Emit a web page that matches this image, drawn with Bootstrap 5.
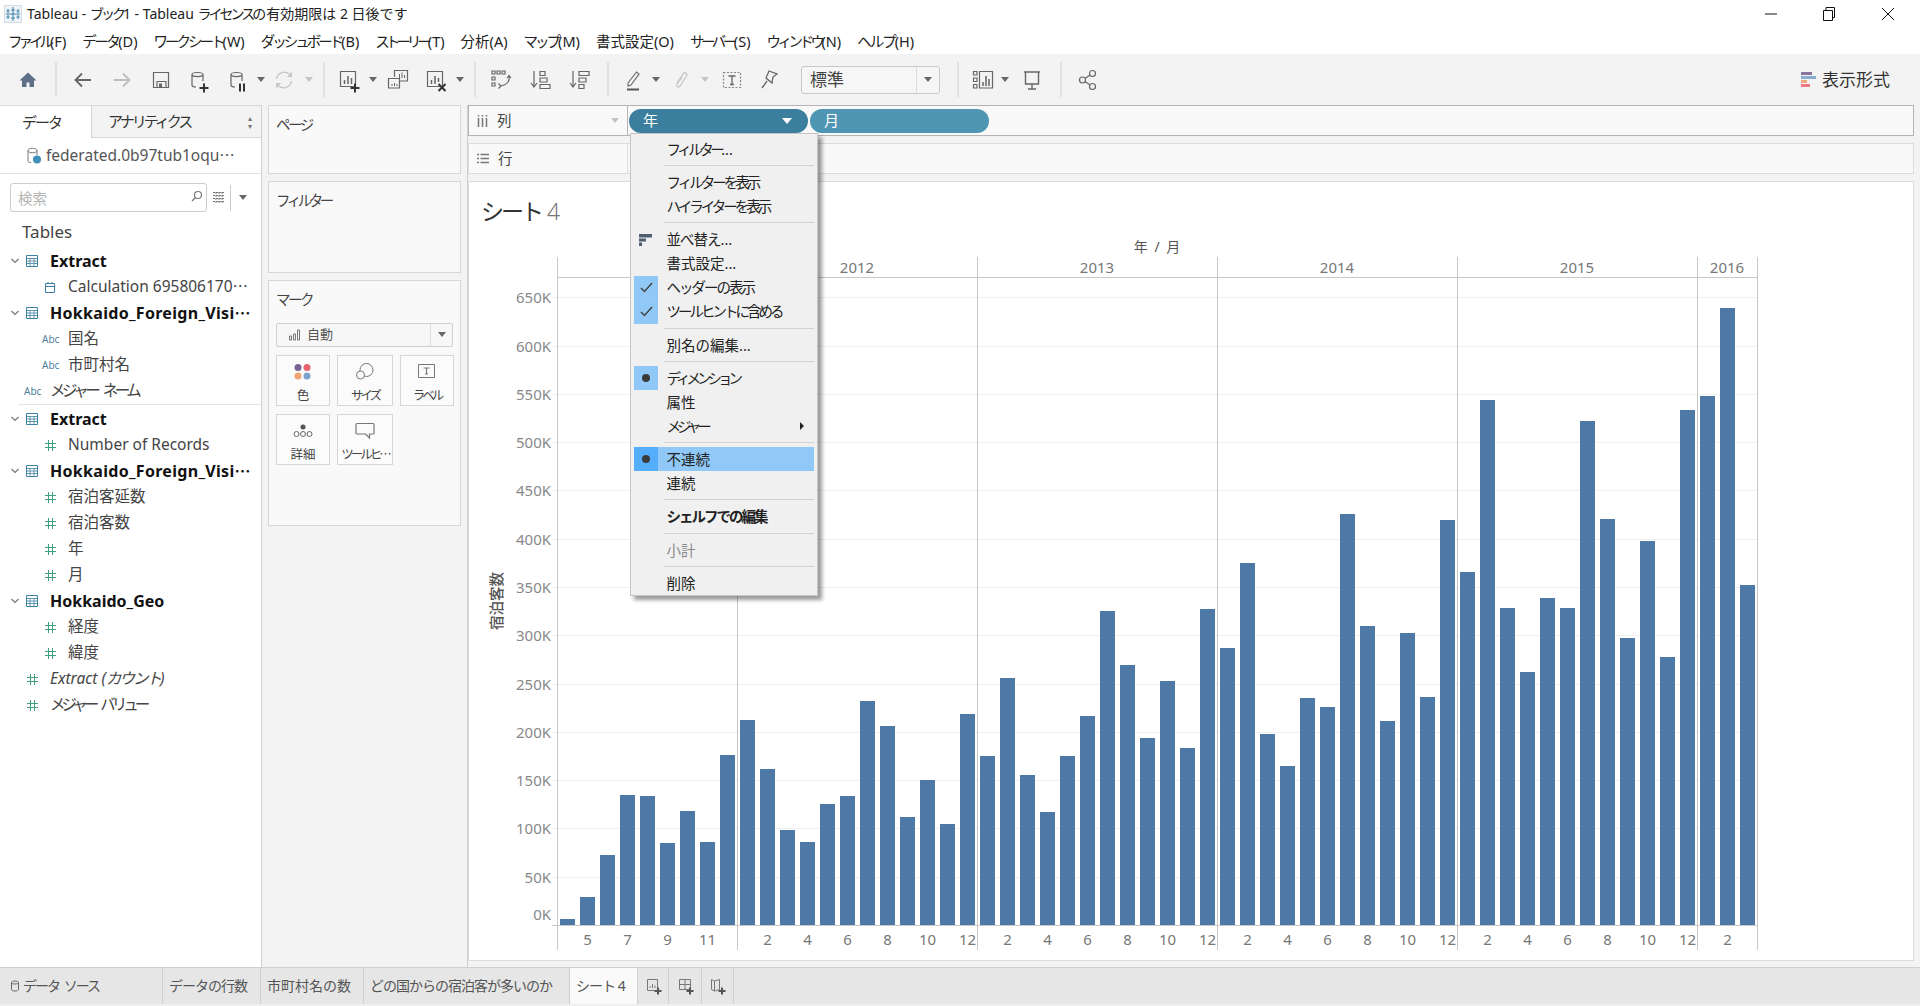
<!DOCTYPE html>
<html lang="ja">
<head>
<meta charset="utf-8">
<title>Tableau</title>
<link href="https://cdn.jsdelivr.net/npm/bootstrap@5.3.0/dist/css/bootstrap.min.css" rel="stylesheet">
<style>
html,body{height:100%}
body{font-family:"Noto Sans","Noto Sans CJK JP",sans-serif;font-size:14.5px;line-height:1;color:#333;background:#fff;overflow:hidden;height:1006px;display:flex;flex-direction:column}
.k05{letter-spacing:-.5px}.k1{letter-spacing:-1px}.k15{letter-spacing:-1.5px}.k2{letter-spacing:-2px}.k25{letter-spacing:-2.5px}.k3{letter-spacing:-3px}.k35{letter-spacing:-3.5px}.k4{letter-spacing:-4px}
.kp{letter-spacing:.3px}
.wsp{word-spacing:5px}.wsp3{word-spacing:3px}
.ic{width:24px;height:24px;fill:none;stroke:#666;stroke-width:1.2;display:block;overflow:visible}
.tri{width:0;height:0;border-left:4px solid transparent;border-right:4px solid transparent;border-top:5px solid #666}
.tri.lt{border-top-color:#c4c4c4}
.ttl{height:27px;padding-left:4px;font-size:14px;color:#222}
.ttl-txt{margin-left:1px}
.wctl{margin-left:auto;padding-right:25px;gap:46px}
.mnu{height:27px;padding:2px 0 0 8px;gap:16px;color:#222}
.tb{height:51px;background:#f3f3f3;display:grid;align-items:center;grid-template-columns:28px 27px 39px 39px 38px 38px 24px 23px 25px 15px 25px 24px 25px 38px 24px 15px 26px 40px 39px 28px 25px 23px 25px 24px 27px 37px 32px 156.5px 25.5px 22px 27px 29px 27px 1fr auto;padding-left:28px}
.tb>*{justify-self:start;transform:translateX(-50%)}
.tb>.tsep{width:1px;height:35px;background:#d0d0d0}
.tb>.tsel{transform:none;width:139px;height:28px;background:#f6f6f6;border:1px solid #c9c9c9;border-radius:3px;font-size:17px;color:#444;padding-left:8px}
.tselarrow{margin-left:auto;width:23px;height:100%;border-left:1px solid #ddd}
.tb>.tview{justify-self:end;transform:none;font-size:17px;color:#333;margin-right:30px;gap:6px}
.vbars{width:15px;gap:1px}
.vbars i{display:block;height:3px}
.vb1{width:11px;background:#86749c}.vb2{width:15px;background:#8aacd2}.vb3{width:6px;background:#eda97e}.vb4{width:9px;background:#f07a84}
.mainrow{height:862px}
.lp{width:262px;border-right:1px solid #cfcfcf;flex:none}
.dtabs{height:33px;font-size:15px}
.dtab-on{width:91px;padding-left:22px;border-top:1px solid #dcdcdc}
.dtab-off{flex:1;padding-left:16px;background:#f3f3f3;border:1px solid #d6d6d6;border-right:0}
.updn{margin-left:auto;margin-right:9px;color:#777;font-size:8px}
.dsrc{height:36px;padding-left:27px;gap:5px;border-bottom:1px solid #e3e3e3;color:#555;font-size:15.5px}
.srch{height:38px;padding:9px 0 0 10px}
.srch input.form-control{width:197px;height:29px;border:1px solid #ccc;border-radius:3px;font-size:14.5px;padding:0 7px;background:#fff}
.srch input.form-control::placeholder{color:#b4b4b4}
.srchwrap{width:197px}
.lens{position:absolute;right:3px;top:6px}
.sgrid{margin-left:6px}
.ssep{width:1px;height:26px;background:#ccc;margin-left:5px}
.stri{margin-left:8px}
.tblh{height:36px;padding:3px 0 0 22px;font-size:17px;color:#444;display:flex;align-items:center}
.fl .list-group-item{height:26px;border:0;padding:0;background:transparent;display:flex;align-items:center;font-size:15.5px;color:#444;white-space:nowrap}
.fl .list-group-item.hdr{font-weight:700;color:#111;font-size:16px}
.abc{font-size:10px;color:#4e7e9b;width:17px;flex:none}
.gry-end{margin:0 0 1px 18px;border-bottom:1px solid #e3e3e3;height:1px}
.chev{width:8px;height:6px;margin:0 7px 0 11px;flex:none}
.tbli{width:12px;height:12px;margin-right:12px;flex:none}
.cali{width:12px;height:12px;flex:none;margin:0 12px 0 44px}
.hsh{width:11px;height:11px;flex:none}
.abc1{margin:0 9px 0 42px}.abc2{margin:0 9px 0 24px}
.hsh1{margin:0 12px 0 45px}.hsh2{margin:0 12px 0 27px}
.mid{width:206px;flex:none;background:#f3f3f3;padding:0 6px;gap:7px;border-right:1px solid #cfcfcf}
.mcard{background:#f9f9f9;border:1px solid #d6d6d6;padding:11px 7px;font-size:14.5px;color:#444}
.cpage{height:69px}
.cfilt{height:92px}
.cmark{height:246px}
.mk-dd{height:24px;margin-top:16px;border:1px solid #d0d0d0;border-radius:2px;background:#f7f7f7;font-size:13px;padding-left:11px;gap:6px;color:#555}
.mk-ar{margin-left:auto;width:22px;height:100%;border-left:1px solid #ddd}
.mk-grid{display:grid;grid-template-columns:54px 56px 54px;column-gap:7px;row-gap:8px;margin-top:8px}
.mk-b{height:51px;border:1px solid #d6d6d6;background:#fbfbfb;font-size:12.5px;color:#444;padding-top:6px;gap:6px}
.rt{background:#f3f3f3;padding-right:6px;gap:7px;min-width:0}
.shelf{height:31px;background:#f9f9f9}
.shelf-l{width:160px;flex:none;height:100%;padding-left:8px;font-size:14.5px;color:#444;gap:9px}
.shelf-col .shelf-l,.shelf-col .shelf-r{border:1px solid #b4b4b4}
.shelf-col .shelf-r{border-left:0;gap:2px;padding-left:1px}
.shelf-row .shelf-l,.shelf-row .shelf-r{border:1px solid #dcdcdc}
.shelf-row .shelf-r{border-left:0}
.shelf-r{flex:1;height:100%}
.pill{width:179px;height:24px;border-radius:12px;color:#fff;font-size:15px;padding-left:14px}
.pill-a{background:#3c7e9e}
.pill-b{background:#4e96b3;padding-left:14px}
.pill .tri{border-top-color:#fff;border-left-width:5px;border-right-width:5px;border-top-width:6px;margin-left:auto;margin-right:16px}
.sheet{flex:1;background:#fff;border:1px solid #dcdcdc;min-height:0;margin-bottom:6px}
.sh-t{height:50px;padding:18px 0 0 12px;font-size:23px;color:#333}
.sh-t .dim{color:#777;font-weight:300}
.chart{display:block;width:1443px;height:727px}
.chart text{font-family:"Noto Sans","Noto Sans CJK JP",sans-serif}
.tabsb{height:39px;background:#e6e6e6;border-top:1px solid #cfcfcf;border-bottom:2px solid #efefef;font-size:14px;color:#555;flex:none}
.st{height:100%;border-right:1px solid #cfcfcf;padding-left:6px}
.st1{width:163px;padding-left:11px;gap:4px}
.st2{width:98px}.st3{width:103px}.st4{width:206px}
.st5{width:68px;background:#fafafa}.st6,.st7,.st8{justify-content:center}
.st6{width:31px}.st7{width:33px}.st8{width:32px}
.st6 svg,.st7 svg,.st8 svg{margin-right:5px}
.ctx.dropdown-menu{position:absolute;top:133px;left:630px;width:188px;background:#f0f0f0;border:1px solid #c6c6c6;border-radius:0;padding:3px 3px 0;box-shadow:4px 4px 4px rgba(0,0,0,.4);font-size:14.5px;color:#222;min-width:0;display:block}
.ci{height:24px;display:flex;align-items:center}
.ci-m{width:24px;height:24px;flex:none;display:flex;align-items:center;justify-content:center;margin-right:8.5px}
.ci-m.on{background:#90c8f8}
.ci.sel{background:#90c8f8}
.ci.sel .ci-m{background:#55aefc}
.ci-s{height:1px;background:#d2d2d2;margin:4px 0 4.25px 30px}
.dotb{width:8px;height:8px;border-radius:50%;background:#3a3a3a}
.ci.dis{color:#8a8a8a}
.ci-arrow{margin-left:auto;margin-right:10px;width:0;height:0;border-top:4px solid transparent;border-bottom:4px solid transparent;border-left:4px solid #222}
</style>
</head>
<body>
<div class="ttl d-flex align-items-center">
<svg width="18" height="18" viewBox="0 0 18 18" class="me-1 flex-none"><rect x=".5" y=".5" width="17" height="17" fill="#eef3f8" stroke="#d5dbe2"/><path d="M9 2v14M2 9h14M4 4v4M2.500 6h3M14 4v4M12.500 6h3M4 10v4M2.500 12h3M14 10v4M12.500 12h3M7 5h4M7 13h4" stroke="#3f7fa8" stroke-width="1"/></svg>
<span class="ttl-txt">Tableau - <span class="k3">ブック</span>1 - Tableau <span class="k3">ライセンス</span>の有効期限は 2 日後です</span>
<div class="wctl d-flex align-items-center">
<svg width="12" height="12" viewBox="0 0 12 12"><path d="M0 6h12" stroke="#111"/></svg>
<svg width="12" height="14" viewBox="0 0 12 14" fill="none" stroke="#111"><path d="M.5 3.500h9v10h-9zM3 3.500V.5h8.500v10H9.500"/></svg>
<svg width="14" height="14" viewBox="0 0 14 14" stroke="#111"><path d="M1 1l12 12M13 1 1 13"/></svg>
</div>
</div>
<div class="mnu d-flex align-items-center">
<span><span class="k4">ファイル</span>(F)</span><span><span class="k25">データ</span>(D)</span><span><span class="k3">ワークシート</span>(W)</span><span><span class="k3">ダッシュボード</span>(B)</span><span><span class="k4">ストーリー</span>(T)</span><span>分析(A)</span><span><span class="k3">マップ</span>(M)</span><span>書式設定(O)</span><span><span class="k35">サーバー</span>(S)</span><span><span class="k35">ウィンドウ</span>(N)</span><span><span class="k2">ヘルプ</span>(H)</span>
</div>
<div class="tb">
<svg class="ic" viewBox="0 0 24 24"><path d="M12 4.500 3.500 12.500H6V19h4.500v-4.500h3V19H18v-6.500h2.500z" fill="#5d7087" stroke="none"/></svg>
<div class="tsep"></div>
<svg class="ic" viewBox="0 0 24 24"><path d="M20 12H5M11 5.500 4.500 12l6.500 6.500" stroke-width="1.800"/></svg>
<svg class="ic" viewBox="0 0 24 24"><path d="M4 12h15M13 5.500l6.500 6.500-6.500 6.500" stroke="#bcbcbc" stroke-width="1.800"/></svg>
<svg class="ic" viewBox="0 0 24 24"><path d="M4.500 4.500h15v15h-15zM8 19.500v-6h9v6"/><path d="M10 15.500h3v4h-3z" fill="#666" stroke="none"/></svg>
<svg class="ic" viewBox="0 0 24 24"><path d="M5 6.500c0-2.700 11-2.700 11 0 0 2.700-11 2.700-11 0V17c0 1.200 1.500 2 4 2M16 6.500V13"/><path d="M12.500 20h9M17 15.500v9" stroke="#333" stroke-width="2"/></svg>
<svg class="ic" viewBox="0 0 24 24"><path d="M6 6.500c0-2.700 11-2.700 11 0 0 2.700-11 2.700-11 0V17c0 1.200 1.500 2 4 2M17 6.500V13"/><path d="M15 15.500v8M19 15.500v8" stroke="#333" stroke-width="2"/></svg>
<div class="tri"></div>
<svg class="ic" viewBox="0 0 24 24"><path d="M4.500 11A8 8 0 0 1 18 6.500M19.500 13A8 8 0 0 1 6 17.500" stroke="#c8c8c8" stroke-width="1.500"/><path d="M20 3.500v5.500h-5zM4 20.500V15h5z" fill="#c8c8c8" stroke="none"/></svg>
<div class="tri lt"></div>
<div class="tsep"></div>
<svg class="ic" viewBox="0 0 24 24"><path d="M3.500 3.500h15v15h-15z"/><path d="M7.500 16v-4M11 16V8M14.500 16v-6" stroke-width="1.500"/><path d="M13.500 20h9M18 15.500v9" stroke="#333" stroke-width="2"/></svg>
<div class="tri"></div>
<svg class="ic" viewBox="0 0 24 24"><path d="M8.500 9V2.500h13V13h-8M2.500 10.500h11V20h-11z"/><path d="M13.500 10V6M16 10V4.500M18.500 10V7M6 18v-2M8.500 18v-3M11 18v-2" stroke-width="1"/></svg>
<svg class="ic" viewBox="0 0 24 24"><path d="M3.500 3.500h15v15h-15z"/><path d="M7.500 16v-4M11 16V8M14.500 14v-4" stroke-width="1.500"/><path d="M14.500 16l7 7M21.500 16l-7 7" stroke="#333" stroke-width="2"/></svg>
<div class="tri"></div>
<div class="tsep"></div>
<svg class="ic" viewBox="0 0 24 24"><path d="M3 3h3v3H3zM8 3h3v3H8zM13 3h3v3h-3zM3 9h3v3H3zM3 15h3v3H3z"/><path d="M20 8c1 5-2 9-8 10M9.500 15.500 12 18l-2.500 2.500M18 10l2-2.500 2 2.500"/></svg>
<svg class="ic" viewBox="0 0 24 24"><path d="M5 3v15M2 15l3 4 3-4"/><path d="M11 3.500h5v4h-5zM11 10h7v4h-7zM11 16.500h10v4H11z"/></svg>
<svg class="ic" viewBox="0 0 24 24"><path d="M5 3v15M2 15l3 4 3-4"/><path d="M11 3.500h10v4H11zM11 10h7v4h-7zM11 16.500h5v4h-5z"/></svg>
<div class="tsep"></div>
<svg class="ic" viewBox="0 0 24 24"><path d="M7 15 15.500 4l2.500 2-8 11-3 1z" stroke-width="1.100"/><path d="M6 21.500h12" stroke="#555" stroke-width="2"/></svg>
<div class="tri"></div>
<svg class="ic" viewBox="0 0 24 24"><path d="M8 15 14 6c2-2.500 5-.5 3.500 2L11 18c-1.500 2-4.500.5-3-2L13 9" stroke="#c8c8c8" stroke-width="1.300"/></svg>
<div class="tri lt"></div>
<svg class="ic" viewBox="0 0 24 24"><path d="M3.500 4.500h17v15h-17z" stroke-dasharray="2 1.500" stroke="#888"/><path d="M8.500 8h7M12 8v8.500M10 16.500h4" stroke-width="1.300"/></svg>
<svg class="ic" viewBox="0 0 24 24"><path d="M12 3l8 3-4 3-1 6-6-5zM10 13l-5 7" stroke-width="1.300"/></svg>
<div class="tsel d-flex align-items-center"><span>標準</span><div class="tselarrow d-flex align-items-center justify-content-center"><div class="tri"></div></div></div>
<div class="tsep"></div>
<svg class="ic" viewBox="0 0 24 24"><path d="M2.500 3.500h3.500V7H2.500zM2.500 10h3.500v3.500H2.500zM2.500 16.500h3.500V20H2.500zM8.500 3.500h13V20h-13z"/><path d="M12 18v-4M15 18V8M18 18v-7" stroke-width="1.500"/></svg>
<div class="tri"></div>
<svg class="ic" viewBox="0 0 24 24"><path d="M4 4h16M5.500 4v12h13V4M12 16v5M8 21h8" stroke-width="1.400"/></svg>
<div class="tsep"></div>
<svg class="ic" viewBox="0 0 24 24"><circle cx="16.500" cy="5.500" r="3"/><circle cx="6.500" cy="12" r="3"/><circle cx="16.500" cy="18.500" r="3"/><path d="M14 7 9 10.500M9 13.500l5 3.500"/></svg>
<div class="tview d-flex align-items-center">
<div class="vbars d-flex flex-column"><i class="vb1"></i><i class="vb2"></i><i class="vb3"></i><i class="vb4"></i></div>
<span>表示形式</span>
</div>
</div>

<div class="mainrow d-flex">
<div class="lp d-flex flex-column">
<div class="dtabs d-flex">
<div class="dtab-on d-flex align-items-center"><span class="k2">データ</span></div>
<div class="dtab-off d-flex align-items-center"><span class="k3">アナリティクス</span><div class="updn d-flex flex-column"><span>▴</span><span>▾</span></div></div>
</div>
<div class="dsrc d-flex align-items-center">
<svg width="14" height="17" viewBox="0 0 14 17" fill="none" stroke="#777"><path d="M1 3.500c0-3 9-3 9 0 0 3-9 3-9 0V14c0 1 1 1.500 3 1.500M10 3.500V8"/><circle cx="10" cy="12.500" r="4" fill="#3f8fbb" stroke="none"/></svg>
<span>federated.0b97tub1oqu⋯</span>
</div>
<div class="srch d-flex align-items-center">
<div class="srchwrap position-relative">
<input class="form-control" placeholder="検索" aria-label="検索">
<svg class="lens" width="14" height="14" viewBox="0 0 14 14" fill="none" stroke="#777" stroke-width="1.200"><circle cx="8" cy="6" r="3.500"/><path d="M5.500 8.500 2 12"/></svg>
</div>
<svg class="sgrid" width="12" height="11" viewBox="0 0 12 11" stroke="#777"><path d="M0 .5h12M0 3.500h12M0 6.500h12M0 9.500h12M3 0v11M6 0v11M9 0v11" stroke-dasharray="2 1"/></svg>
<div class="ssep"></div>
<div class="tri stri"></div>
</div>
<div class="tblh">Tables</div>
<div class="fl list-group list-group-flush flex-grow-1" id="fields"></div>
</div>

<div class="mid d-flex flex-column">
<div class="mcard cpage"><span class="k25">ページ</span></div>
<div class="mcard cfilt"><span class="k35">フィルター</span></div>
<div class="mcard cmark">
<span class="k25">マーク</span>
<div class="mk-dd d-flex align-items-center">
<svg width="13" height="12" viewBox="0 0 13 12" fill="none" stroke="#777"><path d="M1.500 11V7h2v4zM5.500 11V5h2v6zM9.500 11V1h2v10z"/></svg>
<span>自動</span>
<div class="mk-ar d-flex align-items-center justify-content-center"><div class="tri"></div></div>
</div>
<div class="mk-grid">
<div class="mk-b d-flex flex-column align-items-center"><svg width="22" height="22" viewBox="0 0 22 22"><circle cx="6" cy="5.500" r="3.500" fill="#7b6294"/><circle cx="15" cy="5.500" r="3.500" fill="#e8606e"/><circle cx="6" cy="14" r="3.500" fill="#f0a271"/><circle cx="15" cy="14" r="3.500" fill="#7ca4cd"/></svg><span>色</span></div>
<div class="mk-b d-flex flex-column align-items-center"><svg width="22" height="22" viewBox="0 0 22 22" fill="none" stroke="#777"><circle cx="12.500" cy="8" r="6.500"/><circle cx="6.500" cy="13" r="4" fill="#fbfbfb"/></svg><span class="k3">サイズ</span></div>
<div class="mk-b d-flex flex-column align-items-center"><svg width="22" height="22" viewBox="0 0 22 22" fill="none" stroke="#777"><path d="M2.500 2.500h16v13h-16z"/><path d="M7.500 6h6M10.500 6v6M9 12h3" stroke-width="1.200"/></svg><span class="k3">ラベル</span></div>
<div class="mk-b d-flex flex-column align-items-center"><svg width="22" height="22" viewBox="0 0 22 22" fill="none" stroke="#666"><circle cx="11" cy="6" r="2.500" fill="#555" stroke="none"/><circle cx="4.500" cy="13" r="2.500"/><circle cx="11" cy="13" r="2.500"/><circle cx="17.500" cy="13" r="2.500"/></svg><span>詳細</span></div>
<div class="mk-b d-flex flex-column align-items-center"><svg width="22" height="22" viewBox="0 0 22 22" fill="none" stroke="#777" stroke-width="1.200"><path d="M3 2.500h16c.5 0 1 .5 1 1v8.500c0 .5-.5 1-1 1h-3.500V17l-4-4H3c-.5 0-1-.5-1-1V3.500c0-.5.500-1 1-1z"/></svg><span class="k3">ツールヒ⋯</span></div>
</div>
</div>
</div>

<div class="rt flex-grow-1 d-flex flex-column">
<div class="shelf shelf-col d-flex">
<div class="shelf-l d-flex align-items-center">
<svg width="11" height="13" viewBox="0 0 11 13" stroke="#777" stroke-width="1.500"><path d="M1.500 4v9M5.500 4v9M9.500 4v9M1.500 1v1.500M5.500 1v1.500M9.500 1v1.500"/></svg>
<span>列</span><div class="tri lt ms-auto me-2"></div></div>
<div class="shelf-r d-flex align-items-center">
<div class="pill pill-a d-flex align-items-center"><span>年</span><div class="tri"></div></div>
<div class="pill pill-b d-flex align-items-center"><span>月</span></div>
</div>
</div>
<div class="shelf shelf-row d-flex">
<div class="shelf-l d-flex align-items-center">
<svg width="12" height="11" viewBox="0 0 12 11" stroke="#777" stroke-width="1.500"><path d="M0 1.500h2M3.500 1.500H12M0 5.500h2M3.500 5.500H12M0 9.500h2M3.500 9.500H12"/></svg>
<span>行</span></div>
<div class="shelf-r"></div>
</div>
<div class="sheet">
<div class="sh-t"><span class="k3">シート</span> <span class="dim">4</span></div>
<svg class="chart" id="chart" viewBox="469 232 1443 727" role="img" aria-label="宿泊客数"></svg>
</div>
</div>
</div>

<div class="tabsb d-flex">
<div class="st st1 d-flex align-items-center"><svg width="8" height="12" viewBox="0 0 8 12" fill="none" stroke="#666"><path d="M.5 2.500c0-2 7-2 7 0v7c0 2-7 2-7 0zM.5 2.500c0 2 7 2 7 0"/></svg><span class="k2 wsp3">データ ソース</span></div>
<div class="st st2 d-flex align-items-center"><span class="k1">データの行数</span></div>
<div class="st st3 d-flex align-items-center"><span>市町村名の数</span></div>
<div class="st st4 d-flex align-items-center"><span class="k1">どの国からの宿泊客が多いのか</span></div>
<div class="st st5 d-flex align-items-center"><span class="k1">シート 4</span></div>
<div class="st st6 d-flex align-items-center"><svg width="18" height="18" viewBox="0 0 18 18" fill="none" stroke="#777"><path d="M2.500 2.500h10v11h-10zM5 11V9M7.500 11V7M10 11V8.500"/><path d="M9.500 14h7M13 10.500v7" stroke="#555" stroke-width="2"/></svg></div>
<div class="st st7 d-flex align-items-center"><svg width="18" height="18" viewBox="0 0 18 18" fill="none" stroke="#777"><path d="M2.500 2.500h11v10h-11zM8 2.500v10M2.500 7.500h11"/><path d="M9.500 14h7M13 10.500v7" stroke="#555" stroke-width="2"/></svg></div>
<div class="st st8 d-flex align-items-center"><svg width="18" height="18" viewBox="0 0 18 18" fill="none" stroke="#777"><path d="M2.500 2.500l3 1.500 5-1.500v10l-5 1.500-3-1.500zM5.500 4v10"/><path d="M9.500 14h7M13 10.500v7" stroke="#555" stroke-width="2"/></svg></div>
</div>

<div class="ctx dropdown-menu show">
<div class="ci"><div class="ci-m"></div><span><span class="k35">フィルター</span>...</span></div>
<div class="ci-s"></div>
<div class="ci"><div class="ci-m"></div><span class="k3">フィルターを表示</span></div>
<div class="ci"><div class="ci-m"></div><span class="k3">ハイライターを表示</span></div>
<div class="ci-s"></div>
<div class="ci"><div class="ci-m"><svg width="14" height="12" viewBox="0 0 14 12" fill="#4f5d73"><path d="M0 0h13v3.500H0zM0 4.500h7v3H0zM0 8.500h3V12H0z"/></svg></div><span><span class="k1">並べ替え</span>...</span></div>
<div class="ci"><div class="ci-m"></div><span>書式設定...</span></div>
<div class="ci"><div class="ci-m on"><svg width="13" height="11" viewBox="0 0 13 11" fill="none" stroke="#444" stroke-width="1.500"><path d="M1 6l3.500 3.500L12 1"/></svg></div><span class="k2">ヘッダーの表示</span></div>
<div class="ci"><div class="ci-m on"><svg width="13" height="11" viewBox="0 0 13 11" fill="none" stroke="#444" stroke-width="1.500"><path d="M1 6l3.500 3.500L12 1"/></svg></div><span class="k3">ツールヒントに含める</span></div>
<div class="ci-s"></div>
<div class="ci"><div class="ci-m"></div><span>別名の編集...</span></div>
<div class="ci-s"></div>
<div class="ci"><div class="ci-m on"><div class="dotb"></div></div><span class="k4">ディメンション</span></div>
<div class="ci"><div class="ci-m"></div><span>属性</span></div>
<div class="ci"><div class="ci-m"></div><span class="k4">メジャー</span><div class="ci-arrow"></div></div>
<div class="ci-s"></div>
<div class="ci sel"><div class="ci-m"><div class="dotb"></div></div><span>不連続</span></div>
<div class="ci"><div class="ci-m"></div><span>連続</span></div>
<div class="ci-s"></div>
<div class="ci fw-bold"><div class="ci-m"></div><span class="k2">シェルフでの編集</span></div>
<div class="ci-s"></div>
<div class="ci dis"><div class="ci-m"></div><span>小計</span></div>
<div class="ci-s"></div>
<div class="ci"><div class="ci-m"></div><span>削除</span></div>
</div>

<script src="https://cdn.jsdelivr.net/npm/bootstrap@5.3.0/dist/js/bootstrap.bundle.min.js"></script>
<script>
(function(){
var chev='<svg class="chev" viewBox="0 0 8 6" fill="none" stroke="#777" stroke-width="1.200"><path d="M.5 1 4 4.500 7.500 1"/></svg>';
var tbl='<svg class="tbli" viewBox="0 0 12 12" fill="none" stroke="#3d80a3"><path d="M.5 .5h11v11H.5z"/><path d="M.5 3.500h11M.5 6h11M.5 8.500h11M4 3v9M8 3v9" stroke-width=".8"/></svg>';
function hsh(c){return '<svg class="hsh '+c+'" viewBox="0 0 11 11" stroke="#3f9f80" fill="none"><path d="M3.500 0v11M7.500 0v11M0 3.500h11M0 7.500h11"/></svg>';}
var cal='<svg class="cali" viewBox="0 0 12 12" fill="none" stroke="#3d80a3"><path d="M1.500 2.500h9v9h-9zM1.500 5.500h9M4 1v2M8 1v2"/></svg>';
var rows=[
 ['h','Extract'],['cal','Calculation 695806170⋯'],['h','<span class="kp">Hokkaido_Foreign_Visi⋯</span>'],
 ['abc','国名'],['abc','市町村名'],['abct','<span class="k35 wsp">メジャー ネーム</span>'],['line'],
 ['h','Extract'],['n','Number of Records'],['h','<span class="kp">Hokkaido_Foreign_Visi⋯</span>'],
 ['n','宿泊客延数'],['n','宿泊客数'],['n','年'],['n','月'],
 ['h','Hokkaido_Geo'],['n','経度'],['n','緯度'],
 ['nt','<i>Extract (<span class="k2">カウント</span>)</i>'],['nt','<span class="k4 wsp">メジャー バリュー</span>']];
var s='';
rows.forEach(function(r){
 var c=r[0],t=r[1];
 if(c=='line'){s+='<div class="gry-end"></div>';return;}
 if(c=='h'){s+='<div class="list-group-item hdr">'+chev+tbl+'<span>'+t+'</span></div>';return;}
 var icon={cal:cal,abc:'<span class="abc abc1">Abc</span>',abct:'<span class="abc abc2">Abc</span>',n:hsh('hsh1'),nt:hsh('hsh2')}[c];
 s+='<div class="list-group-item">'+icon+'<span>'+t+'</span></div>';
});
document.getElementById('fields').innerHTML=s;

var tops=[919,897,855,795,796,843,811,842,755,720,769,830,842,804,796,701,726,817,780,824,714,756,678,775,812,756,716,611,665,738,681,748,609,648,563,734,766,698,707,514,626,721,633,697,520,572,400,608,672,598,608,421,519,638,541,657,410,396,308,585];
var o='';
for(var i=0;i<14;i++){var y=Math.round(925-48.28*i)+.5;
 if(i>0)o+='<line x1="552" x2="1757" y1="'+y+'" y2="'+y+'" stroke="#f0f0f0"/>';
 var ty=i==0?915:y;
 o+='<text x="551" y="'+(ty+5)+'" text-anchor="end" font-size="15" fill="#888">'+(i*50)+'K</text>';
}
tops.forEach(function(t,i){o+='<rect x="'+(560+20*i)+'" y="'+t+'" width="15" height="'+(925-t)+'" fill="#4e79a7"/>';});
[557.5,737.5,977.5,1217.5,1457.5,1697.5,1757.5].forEach(function(x){o+='<line x1="'+x+'" x2="'+x+'" y1="257" y2="950" stroke="#c8c8c8"/>';});
o+='<line x1="557" x2="1758" y1="277.500" y2="277.500" stroke="#c8c8c8"/><line x1="552" x2="1758" y1="925.500" y2="925.500" stroke="#c8c8c8"/>';
[[857,'2012'],[1097,'2013'],[1337,'2014'],[1577,'2015'],[1727,'2016']].forEach(function(a){o+='<text x="'+a[0]+'" y="273" text-anchor="middle" font-size="15" fill="#777">'+a[1]+'</text>';});
o+='<text x="1157" y="252" text-anchor="middle" font-size="14" word-spacing="3" fill="#555">年 / 月</text>';
o+='<text transform="translate(502 601) rotate(-90)" text-anchor="middle" font-size="14.500" font-weight="500" fill="#555">宿泊客数</text>';
var idx=[[1,5],[3,7],[5,9],[7,11],[10,2],[12,4],[14,6],[16,8],[18,10],[20,12],[22,2],[24,4],[26,6],[28,8],[30,10],[32,12],[34,2],[36,4],[38,6],[40,8],[42,10],[44,12],[46,2],[48,4],[50,6],[52,8],[54,10],[56,12],[58,2]];
idx.forEach(function(a){o+='<text x="'+(567.5+20*a[0])+'" y="945" text-anchor="middle" font-size="15" fill="#777">'+a[1]+'</text>';});
document.getElementById('chart').innerHTML=o;
})();
</script>
</body>
</html>
